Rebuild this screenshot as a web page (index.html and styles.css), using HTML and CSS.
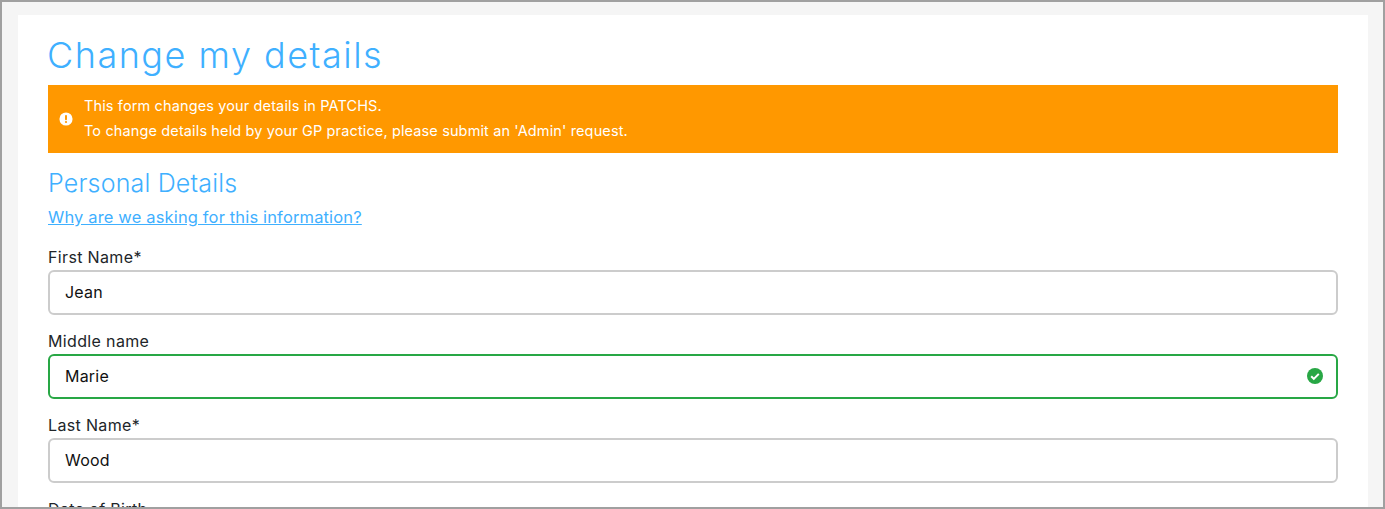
FILE: index.html
```html
<!doctype html>
<html lang="en">
<head>
	<meta charset="utf-8">
	<title>Change my details</title>
	<link rel="stylesheet" href="styles.css">
</head>
<body>
	<div class="frame">
		<div class="card">
			<h1 class="page-title">Change my details</h1>

			<div class="alert">
				<svg class="alert-icon" viewBox="0 0 16 16" aria-hidden="true">
					<circle cx="8" cy="8" r="7.5" fill="#fff"/>
					<rect x="6.9" y="3.4" width="2.2" height="6" rx="1" fill="#ff9800"/>
					<circle cx="8" cy="11.4" r="1.25" fill="#ff9800"/>
				</svg>
				<div class="alert-text">
					<p>This form changes your details in PATCHS.</p>
					<p>To change details held by your GP practice, please submit an 'Admin' request.</p>
				</div>
			</div>

			<h2 class="section-title">Personal Details</h2>
			<a class="why-link" href="#">Why are we asking for this information?</a>

			<div class="field">
				<label class="field-label" for="first">First Name*</label>
				<input class="field-input" id="first" type="text" value="Jean">
			</div>
			<div class="field">
				<label class="field-label" for="middle">Middle name</label>
				<div class="input-wrap">
					<input class="field-input is-valid" id="middle" type="text" value="Marie">
					<svg class="valid-icon" viewBox="0 0 16 16" aria-hidden="true">
						<circle cx="8" cy="8" r="8" fill="#28a745"/>
						<path d="M4.2 8.3l2.6 2.6 5-5" fill="none" stroke="#fff" stroke-width="2"/>
					</svg>
				</div>
			</div>
			<div class="field">
				<label class="field-label" for="last">Last Name*</label>
				<input class="field-input" id="last" type="text" value="Wood">
			</div>
			<div class="field">
				<label class="field-label" for="dob">Date of Birth</label>
			</div>
		</div>
	</div>
</body>
</html>
```

FILE: styles.css
```css
* { margin: 0; padding: 0; box-sizing: border-box; }

body {
	font-family: "Inter", "Liberation Sans", sans-serif;
	color: #212529;
	background-color: #f5f5f5;
	height: 509px;
	overflow: hidden;
}

.frame {
	height: 509px;
	border: 2px solid #a0a0a0;
	padding: 13px 15px 0 16px;
	overflow: hidden;
}

.card {
	background-color: white;
	padding: 15px 30px 0;
	height: 600px;
}

.page-title {
	color: #3fb0ff;
	font-size: 36px;
	font-weight: 300;
	line-height: 50px;
	letter-spacing: 1.5px;
	margin-bottom: 5px;
	margin-left: -1px;
}

.alert {
	background-color: #ff9800;
	color: white;
	height: 68px;
	display: flex;
	align-items: center;
	padding-left: 11px;
	font-size: 14.5px;
	line-height: 25px;
	letter-spacing: 0.13px;
}

.alert-icon { width: 14px; height: 14px; margin-right: 11px; flex: none; }

.alert-text { padding-bottom: 2px; }

.section-title {
	color: #3fb0ff;
	font-size: 25px;
	font-weight: 300;
	line-height: 32px;
	letter-spacing: 0.18px;
	margin-top: 14px;
}

.why-link {
	display: block;
	width: max-content;
	color: #3fb0ff;
	font-size: 16.5px;
	line-height: 24px;
	margin-top: 6px;
	letter-spacing: 0.15px;
	text-decoration: underline;
}

.field { margin-top: 15px; }
.why-link + .field { margin-top: 17px; }

.field-label {
	display: block;
	font-size: 16px;
	line-height: 22px;
	height: 24px;
	letter-spacing: 0.35px;
}

.input-wrap { position: relative; }

.field-input {
	display: block;
	width: 100%;
	height: 45px;
	border: 2px solid #ccc;
	border-radius: 6px;
	padding: 0 15px 2px;
	font-family: inherit;
	font-size: 16px;
	letter-spacing: 0.2px;
	color: #111;
	background-color: white;
}

.field-input.is-valid { border-color: #28a745; }

.valid-icon {
	position: absolute;
	right: 15px;
	top: 14px;
	width: 16px;
	height: 16px;
}
```
